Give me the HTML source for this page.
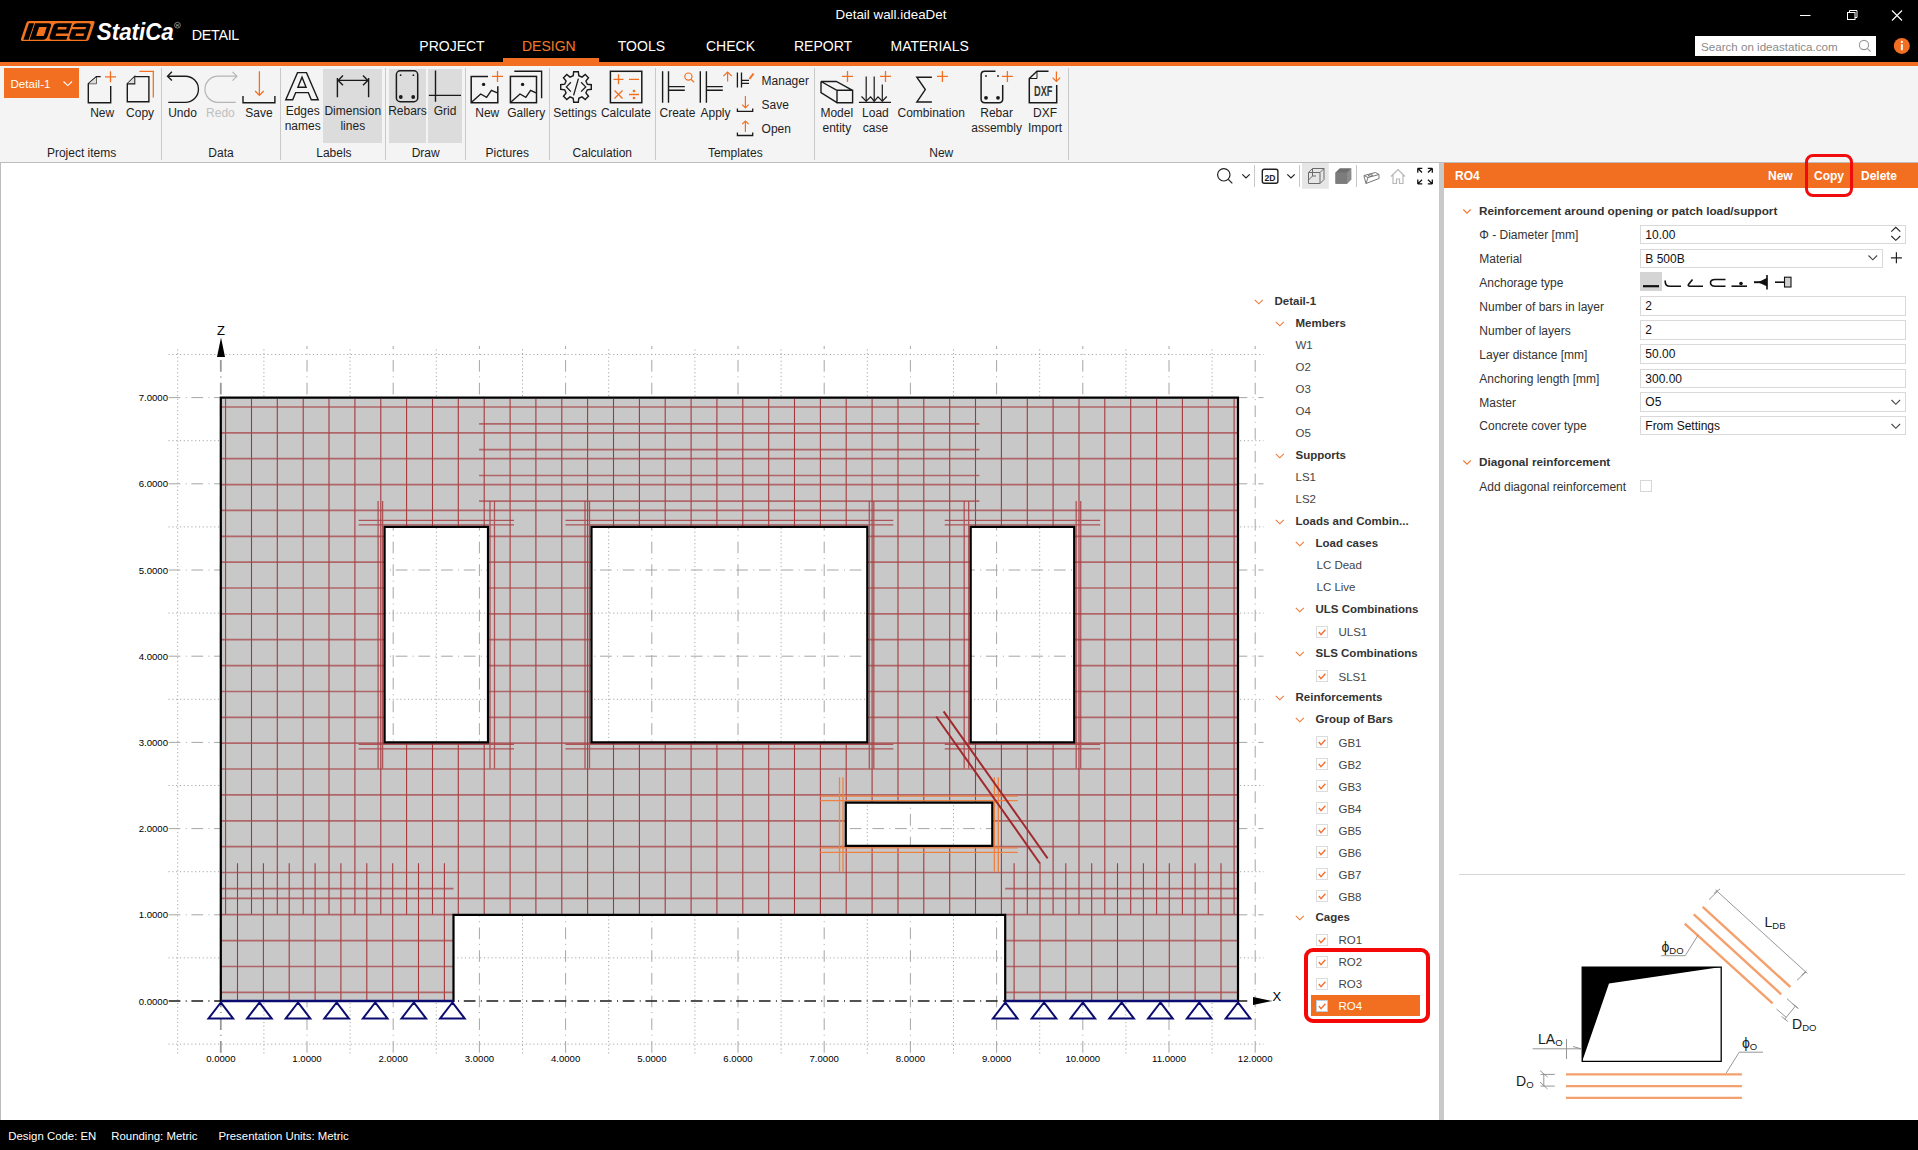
<!DOCTYPE html>
<html><head><meta charset="utf-8">
<style>
*{margin:0;padding:0;box-sizing:border-box}
html,body{width:1918px;height:1150px;overflow:hidden;background:#fff;font-family:"Liberation Sans",sans-serif;color:#222}
.a{position:absolute}
#title{position:absolute;left:0;top:0;width:1918px;height:62px;background:#000}
#oline{position:absolute;left:0;top:62px;width:1918px;height:4px;background:#f26f21}
#ribbon{position:absolute;left:0;top:66px;width:1918px;height:97px;background:#f4f4f4;border-bottom:1px solid #bdbdbd}
#canvas{position:absolute;left:0;top:163px;width:1439px;height:957px;background:#fff;border-left:1px solid #bdbdbd}
#split{position:absolute;left:1439px;top:163px;width:5px;height:957px;background:#c9c9c9}
#panel{position:absolute;left:1444px;top:163px;width:474px;height:957px;background:#fff}
#status{position:absolute;left:0;top:1120px;width:1918px;height:30px;background:#000;color:#fff;font-size:12px}
.tab{position:absolute;top:37px;color:#fff;font-size:14px;letter-spacing:0.1px}
.rl{position:absolute;font-size:12px;color:#1e1e1e;text-align:center;line-height:15px;white-space:nowrap}
.gl{position:absolute;top:145px;font-size:12px;color:#1e1e1e;white-space:nowrap}
.sep{position:absolute;top:68px;width:1px;height:92px;background:#cfcfcf}
.tt{position:absolute;font-size:11.5px;color:#444;white-space:nowrap;line-height:16px}
.tt.b{font-weight:bold;color:#333}
.tt.w{color:#fff}
.cb{position:absolute;width:12px;height:12px;border:1px solid #dcdcdc;background:#fff}
.cb svg{position:absolute;left:-1px;top:-1px}
.cb.sel{border-color:#bcd;background:#fff}
.pl{position:absolute;left:1479px;font-size:12px;color:#333;white-space:nowrap;line-height:16px}
.pi{position:absolute;left:1640px;width:266px;height:20px;border:1px solid #dadada;background:#fff;font-size:12px;color:#111;padding-left:5px;line-height:18px}
</style></head><body>
<div id="title"></div>
<div id="oline"></div>
<div id="ribbon"></div>
<div id="canvas"></div>
<svg class="a" style="left:0;top:0" width="1918" height="1150">
<path d="M177.7 349.3V1054M263.9 349.3V1054M350.1 349.3V1054M436.3 349.3V1054M522.5 349.3V1054M608.7 349.3V1054M694.9 349.3V1054M781.1 349.3V1054M867.3 349.3V1054M953.5 349.3V1054M1039.7 349.3V1054M1125.9 349.3V1054M1212.1 349.3V1054M168.5 1044.1H1263.5M168.5 957.9H1263.5M168.5 871.7H1263.5M168.5 785.5H1263.5M168.5 699.3H1263.5M168.5 613.1H1263.5M168.5 526.9H1263.5M168.5 440.7H1263.5M168.5 354.5H1263.5" stroke="#a8a8a8" stroke-width="1" stroke-dasharray="1.2 2.6" fill="none"/>
<path d="M307 1052.7V346M393.2 1052.7V346M479.4 1052.7V346M565.6 1052.7V346M651.8 1052.7V346M738 1052.7V346M824.2 1052.7V346M910.4 1052.7V346M996.6 1052.7V346M1082.8 1052.7V346M1169 1052.7V346M1255.2 1052.7V346M168.7 914.8H1263.5M168.7 828.6H1263.5M168.7 742.4H1263.5M168.7 656.2H1263.5M168.7 570H1263.5M168.7 483.8H1263.5M168.7 397.6H1263.5" stroke="#a6a6a6" stroke-width="1" stroke-dasharray="11.7 5.3 1 4.7" fill="none"/>
<path d="M220.8 1052.7V357" stroke="#999" stroke-width="1.8" stroke-dasharray="11.7 5.3 1 4.7" fill="none"/>
<path d="M168.7 1001H1252" stroke="#1a1a1a" stroke-width="1.3" stroke-dasharray="11.7 5.3 1 4.7" fill="none"/>
<defs><clipPath id="wc"><path clip-rule="evenodd" d="M220.8 397.6H1238V1001H1005.2V914.8H453.5V1001H220.8ZM384.6 526.9H488V742.4H384.6ZM591.5 526.9H867.3V742.4H591.5ZM970.7 526.9H1074.2V742.4H970.7ZM845.8 802.7H992.3V845.8H845.8Z"/></clipPath></defs>
<path fill-rule="evenodd" fill="#c8c8c8" d="M220.8 397.6H1238V1001H1005.2V914.8H453.5V1001H220.8ZM384.6 526.9H488V742.4H384.6ZM591.5 526.9H867.3V742.4H591.5ZM970.7 526.9H1074.2V742.4H970.7ZM845.8 802.7H992.3V845.8H845.8Z"/>
<g clip-path="url(#wc)">
<path d="M225.6 399V914.6M251.5 399V914.6M277.3 399V914.6M303.2 399V914.6M329 399V914.6M354.9 399V914.6M380.8 399V914.6M406.6 399V914.6M432.5 399V914.6M458.3 399V914.6M484.2 399V914.6M510.1 399V914.6M535.9 399V914.6M561.8 399V914.6M587.6 399V914.6M613.5 399V914.6M639.4 399V914.6M665.2 399V914.6M691.1 399V914.6M716.9 399V914.6M742.8 399V914.6M768.7 399V914.6M794.5 399V914.6M820.4 399V914.6M846.2 399V914.6M872.1 399V914.6M898 399V914.6M923.8 399V914.6M949.7 399V914.6M975.5 399V914.6M1001.4 399V914.6M1027.3 399V914.6M1053.1 399V914.6M1079 399V914.6M1104.8 399V914.6M1130.7 399V914.6M1156.6 399V914.6M1182.4 399V914.6M1208.3 399V914.6M1234.1 399V914.6M237.5 863.2V1001M263.4 863.2V1001M289.2 863.2V1001M315.1 863.2V1001M340.9 863.2V1001M366.8 863.2V1001M392.7 863.2V1001M418.5 863.2V1001M444.4 863.2V1001M1014.1 863.2V1001M1040 863.2V1001M1065.8 863.2V1001M1091.7 863.2V1001M1117.5 863.2V1001M1143.4 863.2V1001M1169.3 863.2V1001M1195.1 863.2V1001M1221 863.2V1001" stroke="#a5383c" stroke-width="1.1" fill="none"/>
<path d="M221 407H1238M221 432.9H1238M221 458.7H1238M221 484.6H1238M221 510.4H1238M221 536.3H1238M221 562.2H1238M221 588H1238M221 613.9H1238M221 639.7H1238M221 665.6H1238M221 691.5H1238M221 717.3H1238M221 743.2H1238M221 769H1238M221 794.9H1238M221 820.8H1238M221 846.6H1238M221 872.5H1238M221 898.3H1238M221 888.6H453.5M221 914.6H453.5M221 940.7H453.5M221 966.5H453.5M221 992.4H453.5M1005.2 888.6H1238M1005.2 914.6H1238M1005.2 940.7H1238M1005.2 966.5H1238M1005.2 992.4H1238M479.1 423.9H979.4M479.1 449.6H979.4M479.1 475.5H979.4M479.1 501.2H979.4" stroke="#a84548" stroke-opacity="0.75" stroke-width="1.7" fill="none"/>
<path d="M358.6 520.4H514M358.6 524.9H514M358.6 744.4H514M358.6 748.9H514M378.1 500.9V768.4M382.6 500.9V768.4M490 500.9V768.4M494.5 500.9V768.4M565.5 520.4H893.3M565.5 524.9H893.3M565.5 744.4H893.3M565.5 748.9H893.3M585 500.9V768.4M589.5 500.9V768.4M869.3 500.9V768.4M873.8 500.9V768.4M944.7 520.4H1100.2M944.7 524.9H1100.2M944.7 744.4H1100.2M944.7 748.9H1100.2M964.2 500.9V768.4M968.7 500.9V768.4M1076.2 500.9V768.4M1080.7 500.9V768.4" stroke="#a84044" stroke-opacity="0.85" stroke-width="1.3" fill="none"/>
<path d="M820.2 796.2H1017.8M820.2 800.7H1017.8M820.2 847.8H1017.8M820.2 852.3H1017.8M839.5 777.2V871.8M843 777.2V871.8M994.4 777.2V871.8M998.3 777.2V871.8" stroke="#ee8040" stroke-width="1.3" fill="none"/>
<path d="M936.2 716.5L1040 863.5M943.6 711.3L1047.6 858.3" stroke="#a02a2e" stroke-width="2" fill="none"/>
</g>
<path fill="none" stroke="#000" stroke-width="2.2" d="M220.8 397.6H1238V1001H1005.2V914.8H453.5V1001H220.8ZM384.6 526.9H488V742.4H384.6ZM591.5 526.9H867.3V742.4H591.5ZM970.7 526.9H1074.2V742.4H970.7ZM845.8 802.7H992.3V845.8H845.8Z"/>
<path d="M221 1001H453.5M1005.2 1001H1238" stroke="#0c0c70" stroke-width="2.3" fill="none"/>
<path d="M220.8 1002.5L208.5 1018.5L233.1 1018.5ZM259.4 1002.5L247.1 1018.5L271.7 1018.5ZM298 1002.5L285.7 1018.5L310.3 1018.5ZM336.6 1002.5L324.3 1018.5L348.9 1018.5ZM375.2 1002.5L362.9 1018.5L387.5 1018.5ZM413.8 1002.5L401.5 1018.5L426.1 1018.5ZM452.4 1002.5L440.1 1018.5L464.7 1018.5ZM1005.2 1002.5L992.9 1018.5L1017.5 1018.5ZM1044 1002.5L1031.7 1018.5L1056.3 1018.5ZM1082.8 1002.5L1070.5 1018.5L1095.1 1018.5ZM1121.6 1002.5L1109.3 1018.5L1133.9 1018.5ZM1160.4 1002.5L1148.1 1018.5L1172.7 1018.5ZM1199.2 1002.5L1186.9 1018.5L1211.5 1018.5ZM1238 1002.5L1225.7 1018.5L1250.3 1018.5Z" stroke="#0c0c70" stroke-width="2" fill="none" stroke-linejoin="miter"/>
<path d="M217 357L221 337.5L225 357Z" fill="#000"/>
<path d="M1253 997L1272.5 1001L1253 1005Z" fill="#000"/>
<text x="221" y="335" font-size="13" text-anchor="middle" fill="#000">Z</text>
<text x="1272.5" y="1001" font-size="13" fill="#000">X</text>
<g font-size="9.6" fill="#000"><text x="220.8" y="1062" text-anchor="middle">0.0000</text><text x="307" y="1062" text-anchor="middle">1.0000</text><text x="393.2" y="1062" text-anchor="middle">2.0000</text><text x="479.4" y="1062" text-anchor="middle">3.0000</text><text x="565.6" y="1062" text-anchor="middle">4.0000</text><text x="651.8" y="1062" text-anchor="middle">5.0000</text><text x="738" y="1062" text-anchor="middle">6.0000</text><text x="824.2" y="1062" text-anchor="middle">7.0000</text><text x="910.4" y="1062" text-anchor="middle">8.0000</text><text x="996.6" y="1062" text-anchor="middle">9.0000</text><text x="1082.8" y="1062" text-anchor="middle">10.0000</text><text x="1169" y="1062" text-anchor="middle">11.0000</text><text x="1255.2" y="1062" text-anchor="middle">12.0000</text><text x="168" y="1004.5" text-anchor="end">0.0000</text><text x="168" y="918.3" text-anchor="end">1.0000</text><text x="168" y="832.1" text-anchor="end">2.0000</text><text x="168" y="745.9" text-anchor="end">3.0000</text><text x="168" y="659.7" text-anchor="end">4.0000</text><text x="168" y="573.5" text-anchor="end">5.0000</text><text x="168" y="487.3" text-anchor="end">6.0000</text><text x="168" y="401.1" text-anchor="end">7.0000</text></g>
</svg>
<div style="position:absolute;left:1311px;top:995px;width:109px;height:21px;background:#f26f21"></div>
<svg style="position:absolute;left:1254px;top:299px" width="10" height="6"><path d="M0.8 0.8L4.8 4.8L8.8 0.8" stroke="#f07a36" stroke-width="1.1" fill="none"/></svg>
<div class="tt b" style="left:1274.5px;top:292.5px">Detail-1</div>
<svg style="position:absolute;left:1275px;top:321px" width="10" height="6"><path d="M0.8 0.8L4.8 4.8L8.8 0.8" stroke="#f07a36" stroke-width="1.1" fill="none"/></svg>
<div class="tt b" style="left:1295.5px;top:314.5px">Members</div>
<div class="tt" style="left:1295.5px;top:336.5px">W1</div>
<div class="tt" style="left:1295.5px;top:358.5px">O2</div>
<div class="tt" style="left:1295.5px;top:380.5px">O3</div>
<div class="tt" style="left:1295.5px;top:402.5px">O4</div>
<div class="tt" style="left:1295.5px;top:424.5px">O5</div>
<svg style="position:absolute;left:1275px;top:453px" width="10" height="6"><path d="M0.8 0.8L4.8 4.8L8.8 0.8" stroke="#f07a36" stroke-width="1.1" fill="none"/></svg>
<div class="tt b" style="left:1295.5px;top:446.5px">Supports</div>
<div class="tt" style="left:1295.5px;top:468.5px">LS1</div>
<div class="tt" style="left:1295.5px;top:490.5px">LS2</div>
<svg style="position:absolute;left:1275px;top:519px" width="10" height="6"><path d="M0.8 0.8L4.8 4.8L8.8 0.8" stroke="#f07a36" stroke-width="1.1" fill="none"/></svg>
<div class="tt b" style="left:1295.5px;top:512.5px">Loads and Combin...</div>
<svg style="position:absolute;left:1295px;top:541px" width="10" height="6"><path d="M0.8 0.8L4.8 4.8L8.8 0.8" stroke="#f07a36" stroke-width="1.1" fill="none"/></svg>
<div class="tt b" style="left:1315.5px;top:534.5px">Load cases</div>
<div class="tt" style="left:1316.5px;top:556.5px">LC Dead</div>
<div class="tt" style="left:1316.5px;top:578.5px">LC Live</div>
<svg style="position:absolute;left:1295px;top:607px" width="10" height="6"><path d="M0.8 0.8L4.8 4.8L8.8 0.8" stroke="#f07a36" stroke-width="1.1" fill="none"/></svg>
<div class="tt b" style="left:1315.5px;top:600.5px">ULS Combinations</div>
<div class="cb" style="left:1316px;top:626px"><svg width="12" height="12"><path d="M2.8 6L5 8.6L9.4 3.8" stroke="#f07030" stroke-width="1.4" fill="none"/></svg></div>
<div class="tt" style="left:1338.5px;top:624.0px">ULS1</div>
<svg style="position:absolute;left:1295px;top:651px" width="10" height="6"><path d="M0.8 0.8L4.8 4.8L8.8 0.8" stroke="#f07a36" stroke-width="1.1" fill="none"/></svg>
<div class="tt b" style="left:1315.5px;top:644.5px">SLS Combinations</div>
<div class="cb" style="left:1316px;top:670px"><svg width="12" height="12"><path d="M2.8 6L5 8.6L9.4 3.8" stroke="#f07030" stroke-width="1.4" fill="none"/></svg></div>
<div class="tt" style="left:1338.5px;top:668.5px">SLS1</div>
<svg style="position:absolute;left:1275px;top:695px" width="10" height="6"><path d="M0.8 0.8L4.8 4.8L8.8 0.8" stroke="#f07a36" stroke-width="1.1" fill="none"/></svg>
<div class="tt b" style="left:1295.5px;top:688.5px">Reinforcements</div>
<svg style="position:absolute;left:1295px;top:717px" width="10" height="6"><path d="M0.8 0.8L4.8 4.8L8.8 0.8" stroke="#f07a36" stroke-width="1.1" fill="none"/></svg>
<div class="tt b" style="left:1315.5px;top:710.5px">Group of Bars</div>
<div class="cb" style="left:1316px;top:736px"><svg width="12" height="12"><path d="M2.8 6L5 8.6L9.4 3.8" stroke="#f07030" stroke-width="1.4" fill="none"/></svg></div>
<div class="tt" style="left:1338.5px;top:734.5px">GB1</div>
<div class="cb" style="left:1316px;top:758px"><svg width="12" height="12"><path d="M2.8 6L5 8.6L9.4 3.8" stroke="#f07030" stroke-width="1.4" fill="none"/></svg></div>
<div class="tt" style="left:1338.5px;top:756.5px">GB2</div>
<div class="cb" style="left:1316px;top:780px"><svg width="12" height="12"><path d="M2.8 6L5 8.6L9.4 3.8" stroke="#f07030" stroke-width="1.4" fill="none"/></svg></div>
<div class="tt" style="left:1338.5px;top:778.5px">GB3</div>
<div class="cb" style="left:1316px;top:802px"><svg width="12" height="12"><path d="M2.8 6L5 8.6L9.4 3.8" stroke="#f07030" stroke-width="1.4" fill="none"/></svg></div>
<div class="tt" style="left:1338.5px;top:800.5px">GB4</div>
<div class="cb" style="left:1316px;top:824px"><svg width="12" height="12"><path d="M2.8 6L5 8.6L9.4 3.8" stroke="#f07030" stroke-width="1.4" fill="none"/></svg></div>
<div class="tt" style="left:1338.5px;top:822.5px">GB5</div>
<div class="cb" style="left:1316px;top:846px"><svg width="12" height="12"><path d="M2.8 6L5 8.6L9.4 3.8" stroke="#f07030" stroke-width="1.4" fill="none"/></svg></div>
<div class="tt" style="left:1338.5px;top:844.5px">GB6</div>
<div class="cb" style="left:1316px;top:868px"><svg width="12" height="12"><path d="M2.8 6L5 8.6L9.4 3.8" stroke="#f07030" stroke-width="1.4" fill="none"/></svg></div>
<div class="tt" style="left:1338.5px;top:866.5px">GB7</div>
<div class="cb" style="left:1316px;top:890px"><svg width="12" height="12"><path d="M2.8 6L5 8.6L9.4 3.8" stroke="#f07030" stroke-width="1.4" fill="none"/></svg></div>
<div class="tt" style="left:1338.5px;top:888.5px">GB8</div>
<svg style="position:absolute;left:1295px;top:915px" width="10" height="6"><path d="M0.8 0.8L4.8 4.8L8.8 0.8" stroke="#f07a36" stroke-width="1.1" fill="none"/></svg>
<div class="tt b" style="left:1315.5px;top:908.5px">Cages</div>
<div class="cb" style="left:1316px;top:934px"><svg width="12" height="12"><path d="M2.8 6L5 8.6L9.4 3.8" stroke="#f07030" stroke-width="1.4" fill="none"/></svg></div>
<div class="tt" style="left:1338.5px;top:932.0px">RO1</div>
<div class="cb" style="left:1316px;top:956px"><svg width="12" height="12"><path d="M2.8 6L5 8.6L9.4 3.8" stroke="#f07030" stroke-width="1.4" fill="none"/></svg></div>
<div class="tt" style="left:1338.5px;top:954.0px">RO2</div>
<div class="cb" style="left:1316px;top:978px"><svg width="12" height="12"><path d="M2.8 6L5 8.6L9.4 3.8" stroke="#f07030" stroke-width="1.4" fill="none"/></svg></div>
<div class="tt" style="left:1338.5px;top:976.0px">RO3</div>
<div class="cb sel" style="left:1316px;top:1000px"><svg width="12" height="12"><path d="M2.8 6L5 8.6L9.4 3.8" stroke="#f07030" stroke-width="1.4" fill="none"/></svg></div>
<div class="tt w" style="left:1338.5px;top:998.0px">RO4</div>
<div style="position:absolute;left:1304px;top:948px;width:126px;height:75px;border:4px solid #f50808;border-radius:9px"></div>
<div id="split"></div>
<div id="panel"></div>
<div id="status"></div>
<div class="a" style="left:791.0px;top:8.1px;width:200px;text-align:center;font-size:13.4px;line-height:1;color:#fff;font-weight:normal;white-space:nowrap;">Detail wall.ideaDet</div>
<div class="a" style="left:419.3px;top:38.9px;font-size:14px;line-height:1;color:#fff;font-weight:normal;white-space:nowrap;">PROJECT</div>
<div class="a" style="left:522.0px;top:38.9px;font-size:14px;line-height:1;color:#f47a2a;font-weight:normal;white-space:nowrap;">DESIGN</div>
<div class="a" style="left:617.8px;top:38.9px;font-size:14px;line-height:1;color:#fff;font-weight:normal;white-space:nowrap;">TOOLS</div>
<div class="a" style="left:706.0px;top:38.9px;font-size:14px;line-height:1;color:#fff;font-weight:normal;white-space:nowrap;">CHECK</div>
<div class="a" style="left:794.0px;top:38.9px;font-size:14px;line-height:1;color:#fff;font-weight:normal;white-space:nowrap;">REPORT</div>
<div class="a" style="left:890.5px;top:38.9px;font-size:14px;line-height:1;color:#fff;font-weight:normal;white-space:nowrap;">MATERIALS</div>
<div class="a" style="left:503px;top:58px;width:96px;height:4px;background:#f26f21"></div>
<svg class="a" style="left:0;top:0" width="260" height="62">
<g transform="translate(0,41) skewX(-18.5) translate(0,-41)">
<rect x="20.3" y="21" width="68.2" height="20" rx="2" fill="#f47321"/>
<rect x="23" y="23.2" width="5.2" height="16.5" fill="#000"/>
<path d="M29.2 23.2H42.6Q46 23.2 46 26.6V36.3Q46 39.7 42.6 39.7H29.2Z" fill="#000"/>
<rect x="34.4" y="27" width="7.7" height="8.9" fill="#f47321"/>
<path d="M51.6 23.2H66V39.7H51.6Q48.2 39.7 48.2 36.3V26.6Q48.2 23.2 51.6 23.2Z" fill="#000"/>
<rect x="53.4" y="27" width="8.8" height="2.4" fill="#f47321"/>
<rect x="53.8" y="33.4" width="13" height="2.5" fill="#f47321"/>
<path d="M71.4 23.2H82.2Q85.6 23.2 85.6 26.6V39.7H71.4Q68 39.7 68 36.3V26.6Q68 23.2 71.4 23.2Z" fill="#000"/>
<rect x="67" y="27" width="14.5" height="2.3" fill="#f47321"/>
<rect x="73.6" y="33.4" width="8.1" height="2.5" fill="#f47321"/>
</g>
<text x="96.8" y="40.4" font-family="Liberation Sans" font-weight="bold" font-style="italic" font-size="23.5" fill="#fff" textLength="77" lengthAdjust="spacingAndGlyphs">StatiCa</text>
<circle cx="177.5" cy="25.2" r="2.9" fill="none" stroke="#ccc" stroke-width="0.6"/>
<text x="177.5" y="26.9" font-family="Liberation Sans" font-size="4.2" fill="#ccc" text-anchor="middle">R</text>
</svg>
<div class="a" style="left:191.8px;top:28.4px;font-size:14.3px;line-height:1;color:#fff;font-weight:normal;white-space:nowrap;letter-spacing:-0.3px">DETAIL</div>
<svg class="a" style="left:1780px;top:0" width="138" height="62">
<path d="M20 15.5H30.5" stroke="#fff" stroke-width="1"/>
<rect x="67.5" y="12.5" width="7.5" height="7" fill="none" stroke="#fff" stroke-width="1"/>
<path d="M69.5 12.5V10.5H77V17.5H75" fill="none" stroke="#fff" stroke-width="1"/>
<path d="M112 10.5L122 20.5M122 10.5L112 20.5" stroke="#fff" stroke-width="1.1"/>
</svg>
<div class="a" style="left:1695px;top:36px;width:181px;height:20px;background:#fff"></div>
<div class="a" style="left:1701.0px;top:40.7px;font-size:11.6px;line-height:1;color:#8a8a8a;font-weight:normal;white-space:nowrap;">Search on ideastatica.com</div>
<svg class="a" style="left:1855px;top:37px" width="20" height="18"><circle cx="9" cy="8" r="4.6" fill="none" stroke="#999" stroke-width="1.1"/><path d="M12.3 11.4L15.6 14.6" stroke="#999" stroke-width="1.2"/></svg>
<svg class="a" style="left:1890px;top:34px" width="24" height="24"><circle cx="11.8" cy="11.9" r="8" fill="#f26f21"/><rect x="10.9" y="10.2" width="1.9" height="6" fill="#fff"/><circle cx="11.85" cy="7.9" r="1.1" fill="#fff"/></svg>
<div class="a" style="left:4px;top:68px;width:75px;height:30px;background:#f26f21"></div>
<div class="a" style="left:10.5px;top:77.7px;font-size:11.6px;line-height:1;color:#fff;font-weight:normal;white-space:nowrap;">Detail-1</div>
<svg class="a" style="left:62px;top:80px" width="12" height="8"><path d="M1.5 1.5L5.8 5.6L10 1.5" stroke="#fff" stroke-width="1.1" fill="none"/></svg>
<div class="a" style="left:323.0px;top:69px;width:58.8px;height:74px;background:#dcdcdc"></div>
<div class="a" style="left:389.0px;top:69px;width:36.7px;height:74px;background:#dcdcdc"></div>
<div class="a" style="left:428.2px;top:69px;width:33.6px;height:74px;background:#dcdcdc"></div>
<div class="a" style="left:161px;top:68px;width:1px;height:92px;background:#c9c9c9"></div>
<div class="a" style="left:280px;top:68px;width:1px;height:92px;background:#c9c9c9"></div>
<div class="a" style="left:385px;top:68px;width:1px;height:92px;background:#c9c9c9"></div>
<div class="a" style="left:465px;top:68px;width:1px;height:92px;background:#c9c9c9"></div>
<div class="a" style="left:549px;top:68px;width:1px;height:92px;background:#c9c9c9"></div>
<div class="a" style="left:655px;top:68px;width:1px;height:92px;background:#c9c9c9"></div>
<div class="a" style="left:814px;top:68px;width:1px;height:92px;background:#c9c9c9"></div>
<div class="a" style="left:1068px;top:68px;width:1px;height:92px;background:#c9c9c9"></div>
<div class="a" style="left:2.2px;top:107.4px;width:200px;text-align:center;font-size:12px;line-height:1;color:#1e1e1e;font-weight:normal;white-space:nowrap;">New</div>
<div class="a" style="left:40.1px;top:107.4px;width:200px;text-align:center;font-size:12px;line-height:1;color:#1e1e1e;font-weight:normal;white-space:nowrap;">Copy</div>
<div class="a" style="left:82.5px;top:107.4px;width:200px;text-align:center;font-size:12px;line-height:1;color:#1e1e1e;font-weight:normal;white-space:nowrap;">Undo</div>
<div class="a" style="left:120.4px;top:107.4px;width:200px;text-align:center;font-size:12px;line-height:1;color:#c0c0c0;font-weight:normal;white-space:nowrap;">Redo</div>
<div class="a" style="left:159.0px;top:107.4px;width:200px;text-align:center;font-size:12px;line-height:1;color:#1e1e1e;font-weight:normal;white-space:nowrap;">Save</div>
<div class="a" style="left:387.3px;top:107.4px;width:200px;text-align:center;font-size:12px;line-height:1;color:#1e1e1e;font-weight:normal;white-space:nowrap;">New</div>
<div class="a" style="left:426.2px;top:107.4px;width:200px;text-align:center;font-size:12px;line-height:1;color:#1e1e1e;font-weight:normal;white-space:nowrap;">Gallery</div>
<div class="a" style="left:475.0px;top:107.4px;width:200px;text-align:center;font-size:12px;line-height:1;color:#1e1e1e;font-weight:normal;white-space:nowrap;">Settings</div>
<div class="a" style="left:525.9px;top:107.4px;width:200px;text-align:center;font-size:12px;line-height:1;color:#1e1e1e;font-weight:normal;white-space:nowrap;">Calculate</div>
<div class="a" style="left:577.5px;top:107.4px;width:200px;text-align:center;font-size:12px;line-height:1;color:#1e1e1e;font-weight:normal;white-space:nowrap;">Create</div>
<div class="a" style="left:615.5px;top:107.4px;width:200px;text-align:center;font-size:12px;line-height:1;color:#1e1e1e;font-weight:normal;white-space:nowrap;">Apply</div>
<div class="a" style="left:831.2px;top:107.4px;width:200px;text-align:center;font-size:12px;line-height:1;color:#1e1e1e;font-weight:normal;white-space:nowrap;">Combination</div>
<div class="a" style="left:307.5px;top:105.4px;width:200px;text-align:center;font-size:12px;line-height:1;color:#1e1e1e;font-weight:normal;white-space:nowrap;">Rebars</div>
<div class="a" style="left:345.0px;top:105.4px;width:200px;text-align:center;font-size:12px;line-height:1;color:#1e1e1e;font-weight:normal;white-space:nowrap;">Grid</div>
<div class="a" style="left:202.7px;top:105.4px;width:200px;text-align:center;font-size:12px;line-height:1;color:#1e1e1e;font-weight:normal;white-space:nowrap;">Edges</div>
<div class="a" style="left:202.7px;top:120.4px;width:200px;text-align:center;font-size:12px;line-height:1;color:#1e1e1e;font-weight:normal;white-space:nowrap;">names</div>
<div class="a" style="left:252.8px;top:105.4px;width:200px;text-align:center;font-size:12px;line-height:1;color:#1e1e1e;font-weight:normal;white-space:nowrap;">Dimension</div>
<div class="a" style="left:252.8px;top:120.4px;width:200px;text-align:center;font-size:12px;line-height:1;color:#1e1e1e;font-weight:normal;white-space:nowrap;">lines</div>
<div class="a" style="left:736.8px;top:107.2px;width:200px;text-align:center;font-size:12px;line-height:1;color:#1e1e1e;font-weight:normal;white-space:nowrap;">Model</div>
<div class="a" style="left:736.8px;top:122.2px;width:200px;text-align:center;font-size:12px;line-height:1;color:#1e1e1e;font-weight:normal;white-space:nowrap;">entity</div>
<div class="a" style="left:775.4px;top:107.2px;width:200px;text-align:center;font-size:12px;line-height:1;color:#1e1e1e;font-weight:normal;white-space:nowrap;">Load</div>
<div class="a" style="left:775.4px;top:122.2px;width:200px;text-align:center;font-size:12px;line-height:1;color:#1e1e1e;font-weight:normal;white-space:nowrap;">case</div>
<div class="a" style="left:896.6px;top:107.2px;width:200px;text-align:center;font-size:12px;line-height:1;color:#1e1e1e;font-weight:normal;white-space:nowrap;">Rebar</div>
<div class="a" style="left:896.6px;top:122.2px;width:200px;text-align:center;font-size:12px;line-height:1;color:#1e1e1e;font-weight:normal;white-space:nowrap;">assembly</div>
<div class="a" style="left:945.0px;top:107.2px;width:200px;text-align:center;font-size:12px;line-height:1;color:#1e1e1e;font-weight:normal;white-space:nowrap;">DXF</div>
<div class="a" style="left:945.0px;top:122.2px;width:200px;text-align:center;font-size:12px;line-height:1;color:#1e1e1e;font-weight:normal;white-space:nowrap;">Import</div>
<div class="a" style="left:-18.4px;top:147.4px;width:200px;text-align:center;font-size:12px;line-height:1;color:#1e1e1e;font-weight:normal;white-space:nowrap;">Project items</div>
<div class="a" style="left:121.0px;top:147.4px;width:200px;text-align:center;font-size:12px;line-height:1;color:#1e1e1e;font-weight:normal;white-space:nowrap;">Data</div>
<div class="a" style="left:233.9px;top:147.4px;width:200px;text-align:center;font-size:12px;line-height:1;color:#1e1e1e;font-weight:normal;white-space:nowrap;">Labels</div>
<div class="a" style="left:325.7px;top:147.4px;width:200px;text-align:center;font-size:12px;line-height:1;color:#1e1e1e;font-weight:normal;white-space:nowrap;">Draw</div>
<div class="a" style="left:407.3px;top:147.4px;width:200px;text-align:center;font-size:12px;line-height:1;color:#1e1e1e;font-weight:normal;white-space:nowrap;">Pictures</div>
<div class="a" style="left:502.3px;top:147.4px;width:200px;text-align:center;font-size:12px;line-height:1;color:#1e1e1e;font-weight:normal;white-space:nowrap;">Calculation</div>
<div class="a" style="left:635.3px;top:147.4px;width:200px;text-align:center;font-size:12px;line-height:1;color:#1e1e1e;font-weight:normal;white-space:nowrap;">Templates</div>
<div class="a" style="left:841.3px;top:147.4px;width:200px;text-align:center;font-size:12px;line-height:1;color:#1e1e1e;font-weight:normal;white-space:nowrap;">New</div>
<div class="a" style="left:761.6px;top:75.2px;font-size:12px;line-height:1;color:#1e1e1e;font-weight:normal;white-space:nowrap;">Manager</div>
<div class="a" style="left:761.6px;top:99.3px;font-size:12px;line-height:1;color:#1e1e1e;font-weight:normal;white-space:nowrap;">Save</div>
<div class="a" style="left:761.6px;top:123.4px;font-size:12px;line-height:1;color:#1e1e1e;font-weight:normal;white-space:nowrap;">Open</div>
<svg class="a" style="left:0;top:0" width="1100" height="164">
<g fill="none" stroke="#1a1a1a" stroke-width="1.4" stroke-linejoin="miter">
<!-- New -->
<path d="M100.7 76.6H96.4L88.3 83.7V102.7H110.7V85.9"/>
<path d="M96.4 76.6V83.7H88.3" stroke-width="1"/>
<path d="M88.8 83.6L96.3 77.2V83.6Z" fill="#ddd" stroke="none"/>
<path d="M105 76.8H116M110.5 71.3V82.3" stroke="#f26f21" stroke-width="1.3"/>
<!-- Copy -->
<path d="M135.4 76.6H148.9V101.7H127.3V83.7L134.6 76.6V83.7H127.3"/>
<path d="M127.8 83.2L134.3 77.2V83.2Z" fill="#ddd" stroke="none"/>
<path d="M139.4 71.3H153.3V97.6" stroke="#f26f21" stroke-width="1.3"/>
<!-- Undo -->
<path d="M168 76.2H185.4A13.05 13.05 0 0 1 185.4 102.3H168.3" stroke-width="1.35"/>
<path d="M171.9 71.8L167.5 76.2L171.9 80.6" stroke-width="1.35"/>
<!-- Redo -->
<path d="M236.7 76.2H218A13.05 13.05 0 0 0 218 102.3H235.7" stroke="#b4b4b4" stroke-width="1.2"/>
<path d="M232.5 71.8L236.9 76.2L232.5 80.6" stroke="#b4b4b4" stroke-width="1.2"/>
<!-- Save -->
<path d="M259.4 71.3V95.4M255.1 91L259.4 95.4L263.7 91" stroke="#f26f21" stroke-width="1.3"/>
<path d="M243 96.1V102.7H274.9V96.1"/>
<!-- Edges names: A -->
<path d="M297.5 72.6H306.5L318.2 99.8H311.3L308.3 92.6H295.7L292.7 99.8H285.8Z" stroke-width="1.4"/>
<path d="M297.9 87.3H306.1L302 77.2Z" stroke-width="1.4"/>
<!-- Dimension lines -->
<path d="M337.4 77.9V97.3M368.6 77.9V97.3M338.5 80.4H367.5" stroke-width="1.4"/>
<path d="M343 75.6L338.2 80.4L343 85.2M363 75.6L367.8 80.4L363 85.2" stroke-width="1.4"/>
<!-- Rebars -->
<rect x="396.4" y="70.8" width="21.3" height="30.9" rx="3.8" stroke-width="1.5"/>
<!-- Grid -->
<path d="M435.5 70.4V101.7M428.9 95.4H461" stroke-width="1.4"/>
<!-- Pictures New -->
<path d="M488 76.4H471.2V102.7H497.8V86.2" stroke-width="1.5"/>
<path d="M471.8 102L480.7 94L486.6 97.3L491.4 90.3L497.4 92.9" stroke-width="1.4"/>
<path d="M492 76.4H503M497.5 70.9V81.9" stroke="#f26f21" stroke-width="1.3"/>
<!-- Gallery -->
<rect x="510.4" y="76.4" width="26.1" height="26.3" stroke-width="1.5"/>
<path d="M514.3 71.3H541.6V98.3" stroke-width="1.4"/>
<path d="M511 102L520 94L525.8 97.3L530.6 90.3L536 92.9" stroke-width="1.4"/>
<!-- Settings gear -->
<path d="M587.3 84.2L591.3 84.7L591.3 89.3L587.3 89.8L585.9 93.0L588.5 96.2L585.2 99.5L582.0 96.9L578.8 98.3L578.3 102.3L573.7 102.3L573.2 98.3L570.0 96.9L566.8 99.5L563.5 96.2L566.1 93.0L564.7 89.8L560.7 89.3L560.7 84.7L564.7 84.2L566.1 81.0L563.5 77.8L566.8 74.5L570.0 77.1L573.2 75.7L573.7 71.7L578.3 71.7L578.8 75.7L582.0 77.1L585.2 74.5L588.5 77.8L585.9 81.0Z" stroke-width="1.4"/>
<path d="M570.9 82.2L566.4 86.9L570.9 91.6M581.1 82.2L585.7 86.9L581.1 91.6M578.4 78.6L573.6 95.4" stroke-width="1.3"/>
<!-- Calculate -->
<rect x="610.4" y="71.3" width="31.4" height="31.4" stroke-width="1.5"/>
<g stroke="#f26f21" stroke-width="1.3">
<path d="M613.5 79.3H623.5M618.5 74.3V84.3M629 79.3H639M614.5 90.5L622.5 98.5M622.5 90.5L614.5 98.5M629 94.5H639"/>
<circle cx="634" cy="91" r="0.7" fill="#f26f21"/><circle cx="634" cy="98" r="0.7" fill="#f26f21"/>
</g>
<!-- Create -->
<path d="M662.6 71.3V102.7M668.5 71.3V102.7M668.5 86.6H684.8M668.5 90.3H684.8" stroke-width="1.4"/>
<circle cx="688.4" cy="76.6" r="3.6" stroke="#f26f21" stroke-width="1.2"/>
<path d="M691 79.3L694.2 82.4" stroke="#f26f21" stroke-width="1.3"/>
<!-- Apply -->
<path d="M700.3 71.3V102.7M706.4 71.3V102.7M706.4 86.6H722.8M706.4 90.3H722.8" stroke-width="1.4"/>
<path d="M727.6 81.5V72M723.4 76.2L727.6 72L731.8 76.2" stroke="#f26f21" stroke-width="1.2"/>
<!-- Manager small -->
<path d="M737.4 72.5V87.4M741.5 72.5V87.4M741.5 80.4H749M741.5 83.4H749" stroke-width="1.3"/>
<path d="M749.5 79L753.5 73.5" stroke="#f26f21" stroke-width="2"/>
<!-- Save small -->
<path d="M745.4 96.1V107.8M742.2 104.6L745.4 107.8L748.6 104.6" stroke="#f26f21" stroke-width="1.2"/>
<path d="M737.4 108.5V111.4H752.7V108.5" stroke-width="1.3"/>
<!-- Open small -->
<path d="M745.4 131.9V121M742.2 124.2L745.4 121L748.6 124.2" stroke="#f26f21" stroke-width="1.2"/>
<path d="M737.4 132.6V135.5H752.7V132.6" stroke-width="1.3"/>
<!-- Model entity -->
<path d="M837 90.3H852.6V102.7H837ZM821 81.5H836.3L852.6 90.3M821 81.5L837 90.3M821 81.5V92.5L837 102.7" stroke-width="1.4"/>
<path d="M842 76.4H853M847.5 70.9V81.9" stroke="#f26f21" stroke-width="1.3"/>
<!-- Load case -->
<path d="M866.2 76.4V101.2M874.2 76.4V101.2M882.3 84.4V101.2M858.9 102.4H891" stroke-width="1.2"/>
<path d="M861.5 96.5L866.2 101.2L870.6 96.8L874.2 101.2L878 96.8L882.3 101.2L886.8 96.5" stroke-width="1.2"/>
<path d="M880 76.4H891M885.5 70.9V81.9" stroke="#f26f21" stroke-width="1.3"/>
<!-- Combination -->
<path d="M931.9 77.2H916.8L925.3 89.6L916.8 102H931.9" stroke-width="1.4"/>
<path d="M936.9 76.4H947.9M942.4 70.9V81.9" stroke="#f26f21" stroke-width="1.3"/>
<!-- Rebar assembly -->
<path d="M995.5 71.3H984.8Q981.1 71.3 981.1 75V99Q981.1 102.7 984.8 102.7H999Q1002.7 102.7 1002.7 99V85" stroke-width="1.5"/>
<path d="M1001.9 76.4H1012.9M1007.4 70.9V81.9" stroke="#f26f21" stroke-width="1.3"/>
<!-- DXF -->
<path d="M1048.5 71.3H1037L1029.3 78.5V102.7H1056.7V85" stroke-width="1.5"/>
<path d="M1037 71.3V78.5H1029.3" stroke-width="1"/>
<path d="M1056.4 71.5V81.5M1052.6 77.7L1056.4 81.5L1060.2 77.7" stroke="#f26f21" stroke-width="1.2"/>
</g>
<g fill="#1a1a1a">
<circle cx="400.6" cy="75.2" r="0.9"/><circle cx="413.4" cy="75.2" r="0.9"/><circle cx="400.8" cy="97" r="1.9"/><circle cx="413.2" cy="97" r="1.9"/>
<circle cx="483.6" cy="84.4" r="1.7"/><circle cx="522.6" cy="84.4" r="1.7"/>
<circle cx="986" cy="76" r="0.9"/><circle cx="998" cy="76" r="0.9"/><circle cx="986" cy="97.8" r="1.9"/><circle cx="998" cy="97.8" r="1.9"/>
</g>
<text x="1034" y="95.8" font-family="Liberation Sans" font-weight="bold" font-size="14.5" fill="#3a3a3a" textLength="18.5" lengthAdjust="spacingAndGlyphs">DXF</text>
</svg>
<div class="a" style="left:1444px;top:163px;width:474px;height:25px;background:#f26f21"></div>
<div class="a" style="left:1455.0px;top:170.0px;font-size:12px;line-height:1;color:#fff;font-weight:bold;white-space:nowrap;">RO4</div>
<div class="a" style="left:1768.0px;top:170.0px;font-size:12px;line-height:1;color:#fff;font-weight:bold;white-space:nowrap;">New</div>
<div class="a" style="left:1814.0px;top:170.0px;font-size:12px;line-height:1;color:#fff;font-weight:bold;white-space:nowrap;">Copy</div>
<div class="a" style="left:1861.0px;top:170.0px;font-size:12px;line-height:1;color:#fff;font-weight:bold;white-space:nowrap;">Delete</div>
<div class="a" style="left:1805px;top:154px;width:47.5px;height:43px;border:3.6px solid #f00c0c;border-radius:8px"></div>
<svg class="a" style="left:1462px;top:206.5px" width="12" height="10"><path d="M1.3 2.5L5 6.2L8.7 2.5" stroke="#f07a36" stroke-width="1.1" fill="none"/></svg>
<div class="a" style="left:1479.0px;top:204.7px;font-size:11.75px;line-height:1;color:#333;font-weight:bold;white-space:nowrap;">Reinforcement around opening or patch load/support</div>
<div class="a" style="left:1479.3px;top:229.0px;font-size:12px;line-height:1;color:#333;font-weight:normal;white-space:nowrap;">&Phi; - Diameter [mm]</div>
<div class="a" style="left:1640.2px;top:224.6px;width:266.2px;height:19.4px;border:1px solid #d9d9d9;background:#fff"></div>
<div class="a" style="left:1645.3px;top:228.6px;font-size:12px;line-height:1;color:#111;font-weight:normal;white-space:nowrap;">10.00</div>
<svg class="a" style="left:1888px;top:225px" width="16" height="18"><path d="M3.3 6.6L7.8 2.3L12.3 6.6M3.3 11L7.8 15.3L12.3 11" stroke="#222" stroke-width="1.1" fill="none"/></svg>
<div class="a" style="left:1479.3px;top:253.3px;font-size:12px;line-height:1;color:#333;font-weight:normal;white-space:nowrap;">Material</div>
<div class="a" style="left:1640.2px;top:248.9px;width:242.4px;height:19.4px;border:1px solid #d9d9d9;background:#fff"></div>
<div class="a" style="left:1645.3px;top:252.9px;font-size:12px;line-height:1;color:#111;font-weight:normal;white-space:nowrap;">B 500B</div>
<svg class="a" style="left:1866px;top:252px" width="14" height="10"><path d="M2.5 3.5L6.8 7.8L11.1 3.5" stroke="#444" stroke-width="1.1" fill="none"/></svg>
<svg class="a" style="left:1888px;top:250px" width="16" height="16"><path d="M8.4 2.3V13.3M2.9 7.8H13.9" stroke="#222" stroke-width="1.2" fill="none"/></svg>
<div class="a" style="left:1479.3px;top:276.9px;font-size:12px;line-height:1;color:#333;font-weight:normal;white-space:nowrap;">Anchorage type</div>
<div class="a" style="left:1479.3px;top:300.6px;font-size:12px;line-height:1;color:#333;font-weight:normal;white-space:nowrap;">Number of bars in layer</div>
<div class="a" style="left:1640.2px;top:296.2px;width:266.2px;height:19.4px;border:1px solid #d9d9d9;background:#fff"></div>
<div class="a" style="left:1645.3px;top:300.2px;font-size:12px;line-height:1;color:#111;font-weight:normal;white-space:nowrap;">2</div>
<div class="a" style="left:1479.3px;top:324.8px;font-size:12px;line-height:1;color:#333;font-weight:normal;white-space:nowrap;">Number of layers</div>
<div class="a" style="left:1640.2px;top:320.4px;width:266.2px;height:19.4px;border:1px solid #d9d9d9;background:#fff"></div>
<div class="a" style="left:1645.3px;top:324.4px;font-size:12px;line-height:1;color:#111;font-weight:normal;white-space:nowrap;">2</div>
<div class="a" style="left:1479.3px;top:348.7px;font-size:12px;line-height:1;color:#333;font-weight:normal;white-space:nowrap;">Layer distance [mm]</div>
<div class="a" style="left:1640.2px;top:344.3px;width:266.2px;height:19.4px;border:1px solid #d9d9d9;background:#fff"></div>
<div class="a" style="left:1645.3px;top:348.3px;font-size:12px;line-height:1;color:#111;font-weight:normal;white-space:nowrap;">50.00</div>
<div class="a" style="left:1479.3px;top:373.0px;font-size:12px;line-height:1;color:#333;font-weight:normal;white-space:nowrap;">Anchoring length [mm]</div>
<div class="a" style="left:1640.2px;top:368.6px;width:266.2px;height:19.4px;border:1px solid #d9d9d9;background:#fff"></div>
<div class="a" style="left:1645.3px;top:372.6px;font-size:12px;line-height:1;color:#111;font-weight:normal;white-space:nowrap;">300.00</div>
<div class="a" style="left:1479.3px;top:396.6px;font-size:12px;line-height:1;color:#333;font-weight:normal;white-space:nowrap;">Master</div>
<div class="a" style="left:1640.2px;top:392.2px;width:266.2px;height:19.4px;border:1px solid #d9d9d9;background:#fff"></div>
<div class="a" style="left:1645.3px;top:396.2px;font-size:12px;line-height:1;color:#111;font-weight:normal;white-space:nowrap;">O5</div>
<svg class="a" style="left:1889px;top:397.2px" width="14" height="10"><path d="M2.5 3L6.8 7.3L11.1 3" stroke="#444" stroke-width="1.1" fill="none"/></svg>
<div class="a" style="left:1479.3px;top:420.3px;font-size:12px;line-height:1;color:#333;font-weight:normal;white-space:nowrap;">Concrete cover type</div>
<div class="a" style="left:1640.2px;top:415.9px;width:266.2px;height:19.4px;border:1px solid #d9d9d9;background:#fff"></div>
<div class="a" style="left:1645.3px;top:419.9px;font-size:12px;line-height:1;color:#111;font-weight:normal;white-space:nowrap;">From Settings</div>
<svg class="a" style="left:1889px;top:420.9px" width="14" height="10"><path d="M2.5 3L6.8 7.3L11.1 3" stroke="#444" stroke-width="1.1" fill="none"/></svg>
<div class="a" style="left:1640.2px;top:271.8px;width:21.6px;height:19.7px;background:#d4d4d4"></div>
<svg class="a" style="left:1630px;top:265px" width="180" height="32" fill="none" stroke="#111" stroke-width="1.6">
<path d="M13 21.2H29" stroke-width="2.2"/>
<path d="M35.2 15.5V16.5Q35.2 21.2 40 21.2H51"/>
<path d="M62.5 14.5L58.5 19.5Q57.5 21.2 60 21.2H73"/>
<path d="M95.5 14.5H85Q80.5 14.5 80.5 17.85Q80.5 21.2 85 21.2H95.5"/>
<path d="M101.5 21.2H117"/>
<circle cx="111" cy="18.5" r="1.8" fill="#111" stroke="none"/>
<path d="M124 17.2H136" stroke-width="2"/>
<path d="M128 17.2L137.2 12.8V21.6Z" fill="#111" stroke="none"/>
<path d="M137 10V24.5" stroke-width="1.6"/>
<path d="M145 17.2H154.5" stroke-width="1.6"/>
<rect x="154.5" y="12.2" width="6.5" height="9.8" fill="#d0d0d0" stroke-width="1.1"/>
</svg>
<svg class="a" style="left:1462px;top:457.5px" width="12" height="10"><path d="M1.3 2.5L5 6.2L8.7 2.5" stroke="#f07a36" stroke-width="1.1" fill="none"/></svg>
<div class="a" style="left:1479.0px;top:456.0px;font-size:11.75px;line-height:1;color:#333;font-weight:bold;white-space:nowrap;">Diagonal reinforcement</div>
<div class="a" style="left:1479.3px;top:480.8px;font-size:12px;line-height:1;color:#333;font-weight:normal;white-space:nowrap;">Add diagonal reinforcement</div>
<div class="a" style="left:1640.4px;top:480px;width:11.6px;height:11.7px;border:1px solid #d6d6d6;background:#fff"></div>
<div class="a" style="left:1459px;top:874px;width:446px;height:1px;background:#d4d4d4"></div>
<svg class="a" style="left:1444px;top:863px" width="474" height="257">
<g transform="translate(-1444,-863)">
<path d="M1582.2 967.1H1721.2V1061.3H1582.2Z" fill="#fff" stroke="#000" stroke-width="1.3"/>
<path d="M1582.2 967.1L1721.2 967.1L1609 983.6L1582.2 1061.3Z" fill="#000"/>
<g stroke="#f4a06c" stroke-width="2.4">
<path d="M1566 1074.4H1741.9M1566 1086.1H1741.9M1566 1097.9H1741.9"/>
<path d="M1702.7 906.9L1790.4 987M1693.8 914.4L1781.2 994.3M1684.7 923.6L1772.6 1003.4"/>
</g>
<g stroke="#8a8a8a" stroke-width="0.9" fill="none">
<path d="M1709 899.6L1717.5 891.3M1797 980.3L1806 971.9M1715.5 889.8L1807.4 973.5"/>
<path d="M1714 893.3L1720 889M1801.5 975.3L1806.5 970.7"/>
<path d="M1661.2 955.7H1685.2L1698.3 934.8"/>
<path d="M1776.5 1009.1L1786.5 1017.6M1787 998.7L1797.5 1008.2M1784.6 1019.3L1795.6 1005.8M1781.5 1016.5L1788 1021.5M1792.5 1003.5L1798.5 1008.5"/>
<path d="M1532.6 1048.8H1581M1566.5 1039V1059M1573 1046.5L1581 1048.8"/>
<path d="M1726.2 1073L1739.2 1052.2H1763"/>
<path d="M1540.5 1074.4H1554.8M1540.5 1086.1H1554.8M1543.8 1074.4V1086.1M1540 1070.5L1547.5 1077M1540 1082L1547.5 1089"/>
</g>
<g font-family="Liberation Sans" fill="#1a1a1a">
<text x="1764.5" y="927" font-size="14">L<tspan font-size="9.5" dy="2">DB</tspan></text>
<text x="1661.5" y="951.7" font-size="14">&#981;<tspan font-size="9.5" dy="2">DO</tspan></text>
<text x="1792" y="1028.7" font-size="14">D<tspan font-size="9.5" dy="2">DO</tspan></text>
<text x="1538" y="1044.4" font-size="14">LA<tspan font-size="9.5" dy="2">O</tspan></text>
<text x="1742" y="1048.3" font-size="14">&#981;<tspan font-size="9.5" dy="2">O</tspan></text>
<text x="1516" y="1086" font-size="14">D<tspan font-size="9.5" dy="2">O</tspan></text>
</g>
</g>
</svg>
<div class="a" style="left:8.3px;top:1130.8px;font-size:11.4px;line-height:1;color:#fff;font-weight:normal;white-space:nowrap;">Design Code: EN</div>
<div class="a" style="left:111.3px;top:1130.8px;font-size:11.4px;line-height:1;color:#fff;font-weight:normal;white-space:nowrap;">Rounding: Metric</div>
<div class="a" style="left:218.4px;top:1130.8px;font-size:11.4px;line-height:1;color:#fff;font-weight:normal;white-space:nowrap;">Presentation Units: Metric</div>
<svg class="a" style="left:1200px;top:163px" width="239" height="27">
<rect x="102" y="0" width="26.8" height="25.8" fill="#e6e6e6"/>
<g fill="none" stroke="#222" stroke-width="1.2">
<circle cx="23.8" cy="11.8" r="6.2"/><path d="M28.3 16.3L32.3 20.4"/>
<path d="M42.3 11.3L46 15L49.7 11.3"/>
<rect x="62.3" y="6.3" width="15.6" height="14" rx="2" stroke-width="1.4"/>
<path d="M87.3 11.3L91 15L94.7 11.3"/>
</g>
<text x="70.1" y="17.6" font-family="Liberation Sans" font-weight="bold" font-size="8.6" fill="#222" text-anchor="middle">2D</text>
<g stroke="#c9c9c9" stroke-width="1"><path d="M254.5 2V24M299.5 2V24M356.5 2V24" transform="translate(-200,0)"/></g>
<g fill="none" stroke="#6a6a6a" stroke-width="1">
<path d="M108.5 9.5L112.5 5.5H124V16.5L120 20.5H108.5ZM108.5 9.5H120V20.5M120 9.5L124 5.5M112.5 5.5V13L108.5 17M112.5 13H116"/>
</g>
<path d="M135.5 9.5L139.8 5.3H151.2V16.5L147 20.7H135.5Z" fill="#6e6e6e"/>
<path d="M135.5 9.5H147V20.7H135.5Z" fill="#7c7c7c"/>
<path d="M147 9.5L151.2 5.3V16.5L147 20.7Z" fill="#8c8c8c"/>
<g fill="none" stroke="#777" stroke-width="1"><path d="M164.2 14L166 20.5L179 15.5V11.5L175.5 9.5L164 12.5ZM164 12.5L168 14.5L179 11.5M168 14.5L166 20.5M168 12.5L171 11.5L173 12.5L170 13.5Z"/></g>
<path d="M191 13.5L198 6.5L205 13.5M193 12V20.5H196.5V16H199.5V20.5H203V12" fill="none" stroke="#b8b8b8" stroke-width="1.2"/>
<g fill="none" stroke="#111" stroke-width="1.3">
<path d="M217.8 5.3V9.8M217.8 5.3H222.3M217.8 5.3L222 9.5M232.3 5.3H227.8M232.3 5.3V9.8M232.3 5.3L228 9.5M217.8 20.9V16.4M217.8 20.9H222.3M217.8 20.9L222 16.7M232.3 20.9H227.8M232.3 20.9V16.4M232.3 20.9L228 16.7"/>
</g>
</svg>
</body></html>
